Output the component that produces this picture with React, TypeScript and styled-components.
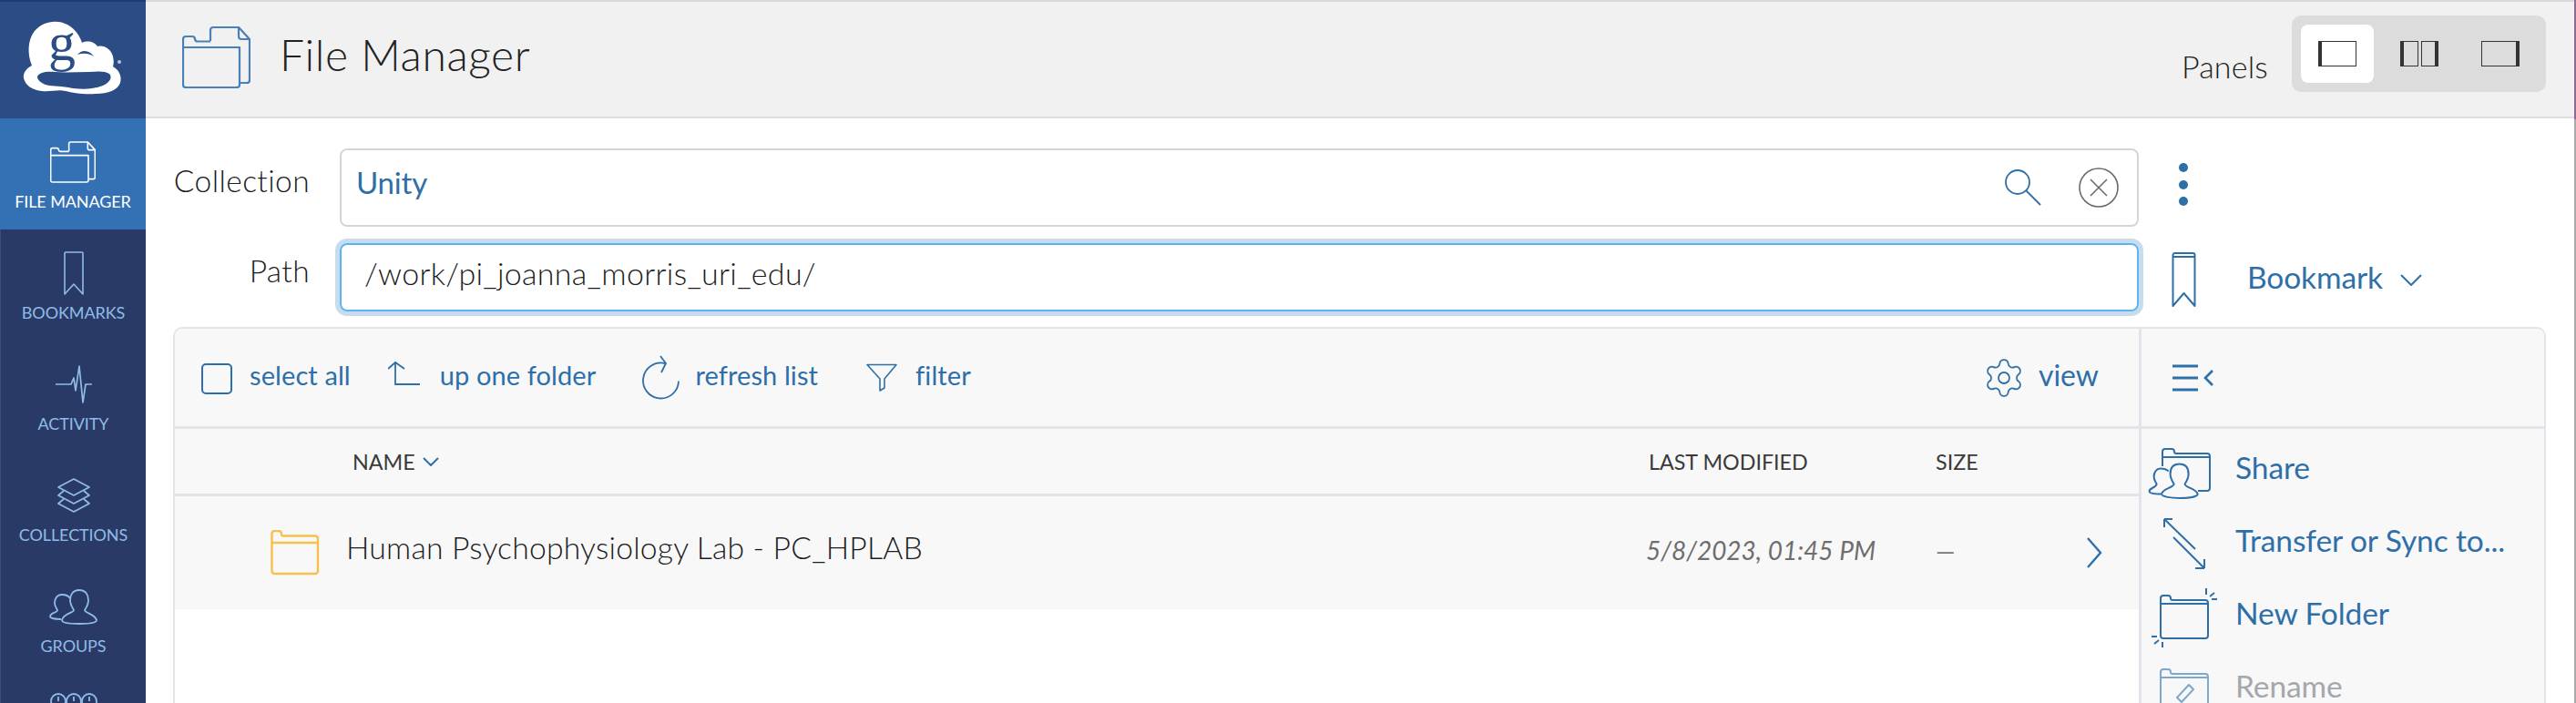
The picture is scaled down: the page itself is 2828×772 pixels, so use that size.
import React from "react";
import styled, { createGlobalStyle } from "styled-components";
import { Settings } from "lucide-react";

const Blue = "#2f6fa8";

const Global = createGlobalStyle`
  html, body { margin: 0; padding: 0; background: #fff; }
  body { font-family: "Lato", "Noto Sans", sans-serif; font-weight: 400; color: #333; }
  * { box-sizing: border-box; }
`;

const Page = styled.div`
  width: 2828px; height: 772px; display: flex; overflow: hidden; background: #fff;
`;
const Sidebar = styled.nav`
  width: 160px; flex: none; background: #2a3a66; border-left: 1px solid #3c4c76; display: flex; flex-direction: column;
`;
const LogoBox = styled.div`
  height: 130px; flex: none; background: #2c4c85; border-top: 2px solid #1f3a70; margin-left: -1px;
`;
const NavItem = styled.div<{ $active?: boolean }>`
  height: 122px; flex: none; padding-top: 18px; display: flex; flex-direction: column; align-items: center;
  background: ${(p) => (p.$active ? "#3470b4" : "transparent")};
  margin-left: ${(p) => (p.$active ? "-1px" : "0")};
  color: ${(p) => (p.$active ? "#fff" : "#8fbce8")};
`;
const NavIcon = styled.div`
  height: 60px; display: flex; align-items: center; justify-content: center;
`;
const NavLabel = styled.div`
  margin-top: 3px; height: 20px; line-height: 20px; font-size: 18px; font-weight: 400; letter-spacing: -0.1px; white-space: nowrap;
`;
const Main = styled.main`
  flex: 1; min-width: 0; display: flex; flex-direction: column;
`;
const Header = styled.header`
  height: 130px; flex: none; background: #f1f1f1; border-top: 2px solid #d9d9d9; border-bottom: 2px solid #dedede;
  display: flex; align-items: center; padding: 0 31px 0 40px;
`;
const HeaderIcon = styled.div`
  flex: none; margin-top: -2px;
`;
const Title = styled.h1`
  margin: -10px 0 0 32px; font-size: 48px; font-weight: 300; color: #222; letter-spacing: 0.6px; line-height: 1;
`;
const PanelsLabel = styled.span`
  margin-left: auto; font-size: 34px; font-weight: 300; color: #222; margin-right: 26px; margin-top: 14px; letter-spacing: 0.2px;
`;
const PanelSwitch = styled.div`
  width: 279px; height: 84px; background: #dcdcdc; border-radius: 10px; padding: 10px; display: flex; gap: 10px; margin-top: -12px;
`;
const PanelBtn = styled.div<{ $on?: boolean }>`
  width: 80px; height: 64px; border-radius: 8px; background: ${(p) => (p.$on ? "#fff" : "transparent")};
  display: flex; align-items: center; justify-content: center;
`;
const Content = styled.div`
  flex: 1; min-height: 0; padding: 33px 0 0 30px;
`;
const FormRow = styled.div<{ $h: number }>`
  display: flex; align-items: center; height: ${(p) => p.$h}px; margin-bottom: 18px;
`;
const FieldLabel = styled.label`
  width: 150px; flex: none; text-align: right; font-size: 33.5px; font-weight: 300; color: #1c1c1c; margin-right: 33px; margin-top: -16px; white-space: nowrap; letter-spacing: 0.4px;
`;
const CollectionBox = styled.div`
  width: 1975px; height: 86px; flex: none; border: 2px solid #d3d6d9; border-radius: 8px; display: flex; align-items: center;
  padding: 0 20px 0 16px; color: ${Blue}; font-size: 33px; font-weight: 400;
`;
const UnityText = styled.span`
  margin-right: auto; margin-top: -12px; letter-spacing: -0.2px;
`;
const ClearBtn = styled.svg`
  margin-left: 41px; flex: none;
`;
const PathBox = styled.div`
  width: 1975px; height: 75px; flex: none; border: 2px solid #5db4f2; border-radius: 8px; box-shadow: 0 0 0 5px #c7dcec;
  display: flex; align-items: center; padding: 0 0 11px 25px; font-size: 34px; font-weight: 300; color: #1c1c1c; letter-spacing: 0.3px;
`;
const Dots = styled.svg`
  margin-left: 43px; flex: none; margin-top: -6px;
`;
const BookmarkWrap = styled.div`
  display: flex; align-items: center; margin-left: 36px; margin-top: 5px; color: ${Blue}; font-size: 33.5px; font-weight: 400;
`;
const BookmarkText = styled.span`
  margin-left: 56px; margin-right: 19px; letter-spacing: -0.1px; margin-top: -6px;
`;
const Panel = styled.section`
  width: 2605px; height: 600px; margin-top: -1px; border: 2px solid #e1e4e8; border-bottom: 0; border-radius: 10px 10px 0 0;
  display: flex; background: #fff; overflow: hidden;
`;
const ListPane = styled.div`
  flex: 1; min-width: 0; display: flex; flex-direction: column;
`;
const Toolbar = styled.div`
  height: 110px; flex: none; background: #f8f8f9; border-bottom: 3px solid #e1e4e8; display: flex; align-items: center;
  padding-left: 29px; color: ${Blue}; font-size: 29px; font-weight: 400; letter-spacing: 0.1px;
`;
const Check = styled.span`
  width: 34px; height: 34px; flex: none; border: 2px solid ${Blue}; border-radius: 5px; margin-top: 2px;
`;
const ToolText = styled.span<{ $ml: number; $mr: number }>`
  margin-left: ${(p) => p.$ml}px; margin-right: ${(p) => p.$mr}px; white-space: nowrap; margin-top: -6px;
`;
const ToolRight = styled.div`
  margin-left: auto; display: flex; align-items: center; padding-right: 44px; font-size: 32px; letter-spacing: 0;
`;
const ToolSvg = styled.svg`
  flex: none;
`;
const ColumnHead = styled.div`
  height: 74px; flex: none; background: #f8f8f9; border-bottom: 3px solid #e1e4e8; display: flex; align-items: center;
  font-size: 23.3px; font-weight: 400; color: #3a3a3a; padding-left: 195px;
`;
const NameHead = styled.div`
  flex: 1; display: flex; align-items: center; gap: 8px;
`;
const ModifiedHead = styled.div`
  width: 315px; flex: none;
`;
const SizeHead = styled.div`
  width: 223px; flex: none;
`;
const FileRow = styled.div`
  height: 124px; flex: none; background: #f8f8f9; display: flex; align-items: center; padding-left: 105px; padding-right: 40px;
`;
const FileName = styled.div`
  flex: 1; margin-left: 29px; font-size: 33.7px; font-weight: 300; color: #1c1c1c; letter-spacing: 0.2px; margin-top: -12px;
`;
const FileDate = styled.div`
  width: 318px; flex: none; font-size: 28px; font-style: italic; font-weight: 400; color: #6e6e6e; margin-top: -6px;
`;
const FileSize = styled.div`
  width: 165px; flex: none; font-size: 27px; color: #777; margin-top: -6px;
`;
const ActionsPane = styled.aside`
  width: 445px; flex: none; border-left: 3px solid #e1e4e8; background: #f8f8f9; display: flex; flex-direction: column;
`;
const ActionsTop = styled.div`
  height: 110px; flex: none; border-bottom: 3px solid #e1e4e8; display: flex; align-items: center; padding-left: 34px;
`;
const ActionsList = styled.div`
  padding-top: 3px; display: flex; flex-direction: column;
`;
const ActionRow = styled.div<{ $off?: boolean }>`
  height: 80px; flex: none; display: flex; align-items: center; gap: 9px;
  color: ${(p) => (p.$off ? "#a4a7ab" : Blue)}; font-size: 33.5px; font-weight: 400; white-space: nowrap;
`;
const ActionSvg = styled.svg`
  flex: none; margin-left: 4px;
`;
const ActionText = styled.span`
  margin-top: -3px; letter-spacing: -0.1px;
`;
const EdgeBar = styled.div`
  width: 2px; flex: none; display: flex; flex-direction: column;
`;
const EdgeTop = styled.div`
  height: 131px; background: #8d6a9a;
`;
const EdgeBottom = styled.div`
  flex: 1; background: #aaaaaa;
`;

const Logo = () => (
  <svg width="160" height="128" viewBox="0 0 160 128">
    <path
      fill="#fff"
      d="M35 70 C30 58 30 42 38 32 C47 21 63 19 74 25 C83 30 88 38 90 45 C96 42 104 44 107 49 C114 47 122 52 124 60 C125 64 125 68 124 71 C131 75 134 82 132 89 C129 97 119 101 105 101 C92 102 80 100 72 98 C64 96 55 99 46 98 C36 97 28 92 26 84 C25 78 29 73 35 70 Z"
    />
    <path
      fill="#2c4c85"
      d="M41 82 C43 77 52 76 60 77 C72 78 85 77 98 77 C108 76 116 76 120 79 C124 83 120 89 113 92 C100 97 85 96 75 94 C65 92 55 93 50 91 C45 89 41 86 41 82 Z"
    />
    <path fill="#2c4c85" d="M85 58 C90 52 98 53 103 60 C97 56 91 56 85 58 Z" />
    <text x="53" y="64" fontFamily="Liberation Serif, serif" fontSize="60" fill="#2c4c85" fontWeight="400">g</text>
    <circle cx="131" cy="66" r="2" fill="#b9c6dc" />
  </svg>
);

const FolderDoc = ({ w, h, c, sw }: { w: number; h: number; c: string; sw: number }) => (
  <svg width={w} height={h} viewBox="0 0 75 68" fill="none" stroke={c} strokeWidth={sw} strokeLinejoin="round" style={{ flex: "none" }}>
    <path d="M31 16 V4 a3 3 0 0 1 3-3 H62 L74 14 V59 a3 3 0 0 1-3 3 H64" />
    <path d="M62 1 V11 a3 3 0 0 0 3 3 H74" />
    <path d="M1 23 V14 a3 3 0 0 1 3-3 H11 a3 3 0 0 1 3 3 a3 3 0 0 0 3 2.5 H31" />
    <path d="M1 23 H63 V64 a3 3 0 0 1 -3 3 H4 a3 3 0 0 1 -3-3 Z" />
  </svg>
);

const BookmarkIcon = ({ w, h, c, sw }: { w: number; h: number; c: string; sw: number }) => (
  <svg width={w} height={h} viewBox="0 0 27 60" fill="none" stroke={c} strokeWidth={sw} strokeLinejoin="round" style={{ flex: "none" }}>
    <path d="M1.5 59 V3 a2 2 0 0 1 2-2 H23.5 a2 2 0 0 1 2 2 V59 L13.5 45 Z" />
    <path d="M1.5 5 H25.5" />
  </svg>
);

const PersonPair = ({ c, sw }: { c: string; sw: number }) => (
  <g fill="none" stroke={c} strokeWidth={sw} strokeLinejoin="round">
    <path d="M33 1 C26 1 23 6 23 12 C23 17 26 21 27 23 C27 26 15 27 14 34 C14 37 24 38 33 38 C42 38 52 37 52 34 C51 28 39 26 39 23 C41 20 43 17 43 12 C43 6 40 1 33 1 Z" />
    <path d="M23 10 C21 7 18 6 14 6 C9 6 6 10 6 15 C6 19 8 21 9 23 C9 26 1 26 1 30 C1 32 8 33 13 33" />
  </g>
);

const PanelIcon = ({ kind }: { kind: 0 | 1 | 2 }) => (
  <svg width="42" height="28" viewBox="0 0 42 28" fill="none" stroke="#333">
    {kind === 0 && (
      <>
        <rect x="0.5" y="0.5" width="41" height="27" />
        <path d="M2 0 V28" strokeWidth="4" />
      </>
    )}
    {kind === 1 && (
      <>
        <rect x="0.5" y="0.5" width="19" height="27" />
        <rect x="23.5" y="0.5" width="18" height="27" />
        <path d="M2 0 V28 M40 0 V28" strokeWidth="4" />
      </>
    )}
    {kind === 2 && (
      <>
        <rect x="0.5" y="0.5" width="41" height="27" />
        <path d="M40 0 V28" strokeWidth="4" />
      </>
    )}
  </svg>
);

const Chevron = ({ w, h }: { w: number; h: number }) => (
  <svg width={w} height={h} viewBox={`0 0 ${w} ${h}`} fill="none" stroke={Blue} strokeWidth="2" style={{ flex: "none" }}>
    <path d={`M1 1 L${w / 2} ${h - 1} L${w - 1} 1`} />
  </svg>
);

export default function App() {
  return (
    <Page>
      <Global />
      <Sidebar>
        <LogoBox><Logo /></LogoBox>
        <NavItem $active>
          <NavIcon><FolderDoc w={50} h={46} c="#fff" sw={2.4} /></NavIcon>
          <NavLabel>FILE MANAGER</NavLabel>
        </NavItem>
        <NavItem>
          <NavIcon>
            <svg width="22" height="48" viewBox="0 0 22 48" fill="none" stroke="currentColor" strokeWidth="1.6" strokeLinejoin="round">
              <path d="M1 47 V2 a1 1 0 0 1 1-1 H20 a1 1 0 0 1 1 1 V47 L11 36 Z" />
            </svg>
          </NavIcon>
          <NavLabel>BOOKMARKS</NavLabel>
        </NavItem>
        <NavItem>
          <NavIcon>
            <svg width="40" height="42" viewBox="0 0 40 42" fill="none" stroke="currentColor" strokeWidth="1.7" strokeLinejoin="round">
              <path d="M0 21 H17 L20 14 L22 28 L26 1 L30 41 L33 21 H40" />
            </svg>
          </NavIcon>
          <NavLabel>ACTIVITY</NavLabel>
        </NavItem>
        <NavItem>
          <NavIcon>
            <svg width="36" height="38" viewBox="0 0 36 38" fill="none" stroke="currentColor" strokeWidth="1.7" strokeLinejoin="round">
              <path d="M18 1 L35 10 L18 19 L1 10 Z" />
              <path d="M7 14 L1 19 L18 28 L35 19 L29 14" />
              <path d="M7 23 L1 28 L18 37 L35 28 L29 23" />
            </svg>
          </NavIcon>
          <NavLabel>COLLECTIONS</NavLabel>
        </NavItem>
        <NavItem>
          <NavIcon>
            <svg width="53" height="39" viewBox="0 0 53 39"><PersonPair c="currentColor" sw={1.8} /></svg>
          </NavIcon>
          <NavLabel>GROUPS</NavLabel>
        </NavItem>
        <NavItem>
          <NavIcon>
            <svg width="52" height="22" viewBox="0 0 52 22" fill="none" stroke="currentColor" strokeWidth="1.8" style={{ marginTop: -37 }}>
              <circle cx="9" cy="11" r="8" /><circle cx="26" cy="11" r="8" /><circle cx="43" cy="11" r="8" />
              <path d="M9 6 V11 M26 6 V11 M43 6 V11" />
            </svg>
          </NavIcon>
        </NavItem>
      </Sidebar>
      <Main>
        <Header>
          <HeaderIcon><FolderDoc w={75} h={68} c="#4a80b8" sw={2.2} /></HeaderIcon>
          <Title>File Manager</Title>
          <PanelsLabel>Panels</PanelsLabel>
          <PanelSwitch>
            <PanelBtn $on><PanelIcon kind={0} /></PanelBtn>
            <PanelBtn><PanelIcon kind={1} /></PanelBtn>
            <PanelBtn><PanelIcon kind={2} /></PanelBtn>
          </PanelSwitch>
        </Header>
        <Content>
          <FormRow $h={86}>
            <FieldLabel>Collection</FieldLabel>
            <CollectionBox>
              <UnityText>Unity</UnityText>
              <svg width="40" height="40" viewBox="0 0 40 40" fill="none" stroke={Blue} strokeWidth="1.8">
                <circle cx="14" cy="14" r="13" />
                <path d="M23.5 23.5 L39 39" />
              </svg>
              <ClearBtn width="44" height="44" viewBox="0 0 44 44" fill="none" stroke="#6b6b6b" strokeWidth="1.6">
                <circle cx="22" cy="22" r="21" />
                <path d="M13 13 L31 31 M31 13 L13 31" />
              </ClearBtn>
            </CollectionBox>
            <Dots width="12" height="50" viewBox="0 0 12 50" fill={Blue}>
              <circle cx="6" cy="6" r="5" /><circle cx="6" cy="25" r="5" /><circle cx="6" cy="43" r="5" />
            </Dots>
          </FormRow>
          <FormRow $h={75}>
            <FieldLabel>Path</FieldLabel>
            <PathBox>/work/pi_joanna_morris_uri_edu/</PathBox>
            <BookmarkWrap>
              <BookmarkIcon w={27} h={60} c={Blue} sw={2} />
              <BookmarkText>Bookmark</BookmarkText>
              <Chevron w={24} h={13} />
            </BookmarkWrap>
          </FormRow>
          <Panel>
            <ListPane>
              <Toolbar>
                <Check />
                <ToolText $ml={19} $mr={41}>select all</ToolText>
                <ToolSvg width="36" height="38" viewBox="427 400 36 38" fill="none" stroke={Blue} strokeWidth="1.8">
                  <path d="M427 409 L435 402 L445 409 M435 402 V426 H462" />
                </ToolSvg>
                <ToolText $ml={21} $mr={51}>up one folder</ToolText>
                <ToolSvg width="42" height="50" viewBox="707 386 42 50" fill="none" stroke={Blue} strokeWidth="1.8">
                  <path d="M747 414.5 A19.5 19.5 0 1 1 732 395" />
                  <path d="M727 387 L733 395 L728 405" />
                </ToolSvg>
                <ToolText $ml={16} $mr={53}>refresh list</ToolText>
                <ToolSvg width="34" height="32" viewBox="951 398 34 32" fill="none" stroke={Blue} strokeWidth="1.6" strokeLinejoin="round">
                  <path d="M952 399.5 H984 L971 415 V425 L966 428 V415 Z" />
                </ToolSvg>
                <ToolText $ml={20} $mr={0}>filter</ToolText>
                <ToolRight>
                  <Settings size={48} strokeWidth={0.9} color={Blue} />
                  <ToolText $ml={14} $mr={0}>view</ToolText>
                </ToolRight>
              </Toolbar>
              <ColumnHead>
                <NameHead>NAME <Chevron w={18} h={10} /></NameHead>
                <ModifiedHead>LAST MODIFIED</ModifiedHead>
                <SizeHead>SIZE</SizeHead>
              </ColumnHead>
              <FileRow>
                <svg width="54" height="50" viewBox="0 0 54 50" fill="none" stroke="#f7c04a" strokeWidth="2.4" strokeLinejoin="round" style={{ flex: "none" }}>
                  <path d="M1.5 14 V4 a3 3 0 0 1 3-3 H9 a3 3 0 0 1 3 3 a2 2 0 0 0 2 2.5 H49 a3 3 0 0 1 3 3 V14 Z" />
                  <path d="M1.5 14 V45 a3 3 0 0 0 3 3 H49 a3 3 0 0 0 3-3 V14" />
                </svg>
                <FileName>Human Psychophysiology Lab - PC_HPLAB</FileName>
                <FileDate>5/8/2023, 01:45 PM</FileDate>
                <FileSize>—</FileSize>
                <svg width="18" height="34" viewBox="0 0 18 34" fill="none" stroke={Blue} strokeWidth="2.4" style={{ flex: "none" }}>
                  <path d="M2 1 L16 17 L2 33" />
                </svg>
              </FileRow>
            </ListPane>
            <ActionsPane>
              <ActionsTop>
                <svg width="46" height="30" viewBox="0 0 46 30" fill="none" stroke={Blue}>
                  <path d="M0 2 H28 M0 15 H28 M0 28 H28" strokeWidth="3" />
                  <path d="M44 7 L36 15 L44 23" strokeWidth="2.6" />
                </svg>
              </ActionsTop>
              <ActionsList>
                <ActionRow>
                  <ActionSvg width="90" height="80" viewBox="2355 475 90 80" fill="none" stroke={Blue} strokeWidth="2" strokeLinejoin="round">
                    <path d="M2374 513 V497 a3 3 0 0 1 3-3 H2384 a3 3 0 0 1 3 3 a2 2 0 0 0 2 2 H2423 a3 3 0 0 1 3 3 V537 a3 3 0 0 1 -3 3 H2413" />
                    <path d="M2374 503 H2426" />
                    <g transform="translate(2358.6,509.5)">
                      <path d="M34 1 C26 1 24 6 24 12 C24 17 27 21 28 23 C28 27 15 28 14.5 34 C14.5 37 25 38.5 34 38.5 C44 38.5 54 37 54 34 C53 28 40 27 40 23 C42 20 44 17 44 12 C44 6 42 1 34 1 Z" />
                      <path d="M22 9 C20 7 18 6 13 6 C9 6 6 10 6 15 C6 19 8 21 9 23 C9 27 1 27 1 31 C1 33 7 34 14 34" />
                    </g>
                  </ActionSvg>
                  <ActionText>Share</ActionText>
                </ActionRow>
                <ActionRow>
                  <ActionSvg width="90" height="80" viewBox="2355 555 90 80" fill="none" stroke={Blue} strokeWidth="2">
                    <path d="M2376 571 L2410 604 M2376 571 H2385 M2376 571 V580" />
                    <path d="M2386 591 L2420 625 M2420 625 H2410 M2420 625 V615" />
                  </ActionSvg>
                  <ActionText>Transfer or Sync to...</ActionText>
                </ActionRow>
                <ActionRow>
                  <ActionSvg width="90" height="80" viewBox="2355 635 90 80" fill="none" stroke={Blue} strokeWidth="2" strokeLinejoin="round">
                    <path d="M2372 663 V658 a3 3 0 0 1 3-3 H2380 a3 3 0 0 1 3 3 a2 2 0 0 0 2 2 H2421 a3 3 0 0 1 3 3 V699 a3 3 0 0 1 -3 3 H2375 a3 3 0 0 1 -3 -3 Z" />
                    <path d="M2372 664 H2424" />
                    <path d="M2422 647 V654 M2431 652 L2426 656 M2434 659 H2428 M2362 700 H2368 M2365 708 L2370 704 M2374 706 V712" />
                  </ActionSvg>
                  <ActionText>New Folder</ActionText>
                </ActionRow>
                <ActionRow $off>
                  <ActionSvg width="90" height="80" viewBox="2355 715 90 80" fill="none" stroke="#7ea9cf" strokeWidth="2" strokeLinejoin="round">
                    <path d="M2372 790 V739 a3 3 0 0 1 3-3 H2380 a3 3 0 0 1 3 3 a2 2 0 0 0 2 2 H2421 a3 3 0 0 1 3 3 V790" />
                    <path d="M2372 745 H2424" />
                    <path d="M2403 753 L2408 758 L2395 772 L2390 767 Z" />
                  </ActionSvg>
                  <ActionText>Rename</ActionText>
                </ActionRow>
              </ActionsList>
            </ActionsPane>
          </Panel>
        </Content>
      </Main>
      <EdgeBar><EdgeTop /><EdgeBottom /></EdgeBar>
    </Page>
  );
}
